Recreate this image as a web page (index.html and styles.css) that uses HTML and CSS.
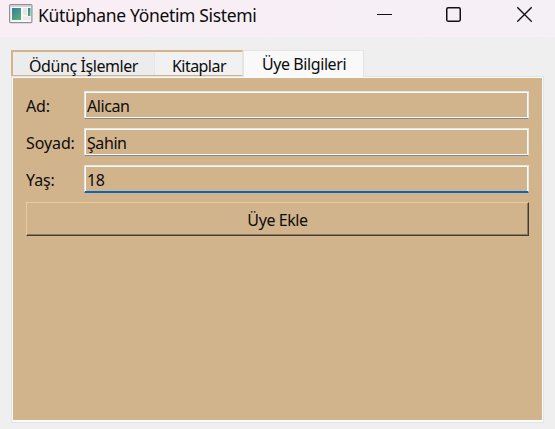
FILE: index.html
```html
<!DOCTYPE html>
<html lang="tr">
<head>
<meta charset="utf-8">
<title>Kütüphane Yönetim Sistemi</title>
<link rel="stylesheet" href="styles.css">
</head>
<body>
<header class="titlebar">
  <svg class="app-icon" width="24" height="20" viewBox="0 0 24 20">
    <defs><linearGradient id="g" x1="0" y1="0" x2=".6" y2="1"><stop offset="0" stop-color="#397aa0"/><stop offset="1" stop-color="#55ae78"/></linearGradient></defs>
    <rect x=".6" y=".6" width="22.3" height="18" rx="1" fill="#f7f7f8" stroke="#8e9096" stroke-width="1.2"/>
    <path d="M1.2 2H22.3" stroke="#c9cbd5" stroke-width="1.6"/>
    <rect x="3" y="4" width="9" height="12" fill="url(#g)"/>
    <rect x="14" y="4" width="4" height="7" fill="#e3e5e6"/>
    <rect x="14" y="12.5" width="8" height="3.5" fill="#e9eaeb"/>
    <rect x="19" y="4" width="2.5" height="8" fill="url(#g)"/>
  </svg>
  <h1 class="title">Kütüphane Yönetim Sistemi</h1>
  <div class="controls">
    <svg width="15" height="16" viewBox="0 0 15 16"><path d="M0 8.5H15" stroke="#111" stroke-width="1"/></svg>
    <svg class="maximize" width="15" height="16" viewBox="0 0 15 16"><rect x=".75" y="1.75" width="13.5" height="13.5" rx="1.4" fill="none" stroke="#111" stroke-width="1.5"/></svg>
    <svg width="15" height="16" viewBox="0 0 15 16"><path d="M.3 1.3L14.7 15.7M14.7 1.3L.3 15.7" stroke="#111" stroke-width="1.3"/></svg>
  </div>
</header>
<main class="content">
  <nav class="tabs">
    <div class="tab tab-first">Ödünç İşlemler</div>
    <div class="tab tab-second">Kitaplar</div>
    <div class="tab tab-active">Üye Bilgileri</div>
  </nav>
  <section class="panel">
    <div class="row"><span class="label">Ad:</span><div class="field">Alican</div></div>
    <div class="row"><span class="label">Soyad:</span><div class="field">Şahin</div></div>
    <div class="row"><span class="label">Yaş:</span><div class="field focused">18</div></div>
    <button class="add">Üye Ekle</button>
  </section>
</main>
</body>
</html>
```
FILE: styles.css
```css
* { box-sizing: border-box; }
body {
  margin: 0;
  width: 555px;
  height: 429px;
  overflow: hidden;
  background: #efefef;
  color: #0c0c0c;
  font: 16px/20px "Noto Sans", sans-serif;
  letter-spacing: -0.42px;
  white-space: nowrap;
}
.titlebar {
  display: flex;
  align-items: flex-start;
  height: 37px;
  background: linear-gradient(90deg, #f9eef4, #f5f0f6);
}
.app-icon { margin: 4px 0 0 9px; }
.title {
  margin: 3px 0 0 5px;
  font-size: 17.5px;
  line-height: 24px;
  font-weight: 400;
  letter-spacing: -0.34px;
}
.controls {
  display: flex;
  gap: 55px;
  margin: 6px 23px 0 auto;
}
.maximize { margin: 0 1px 0 -1px; }
.content { padding: 13px 11px 0; }
.tabs {
  display: flex;
  height: 26px;
}
.tab {
  background: #ececec;
  border-top: 2px solid #d2b48c;
  border-bottom: 1px solid #d2b48c;
  padding-top: 4px;
}
.tab-first {
  width: 143px;
  border-left: 2px solid #d2b48c;
  padding-left: 16px;
}
.tab-second {
  width: 89px;
  background: #f1f1f1;
  border-right: 1px solid #e5e5e5;
  box-shadow: inset 1px 0 #e5e5e5;
  padding-left: 18px;
  letter-spacing: -0.55px;
}
.tab-active {
  width: 121px;
  height: 27px;
  background: #f9f9f9;
  border: 1px solid #e4e4e4;
  border-bottom: 0;
  padding: 3px 0 0 18px;
  position: relative;
}
.panel {
  width: 533px;
  height: 347px;
  border: 1px solid #e2e3e4;
  background: #d2b48c;
  box-shadow: inset 0 0 0 1px #fbfbfb, inset 0 -2px #fbfbfb;
  padding: 14px 14px 0;
}
.row {
  display: flex;
  height: 28px;
  margin-bottom: 9px;
}
.label { width: 58px; padding-top: 5px; letter-spacing: -0.1px; }
.field {
  width: 445px;
  padding: 4px 0 0 2px;
  border: 1px solid #e6e6e6;
  border-bottom-color: #85868a;
  box-shadow: inset 0 0 0 1px #fafafa;
  border-radius: 1px;
}
.focused {
  border-bottom: 2px solid #0867bd;
  box-shadow: inset 1px 1px #fafafa, inset -1px 0 #fafafa;
}
.add {
  display: block;
  width: 503px;
  height: 34px;
  padding: 2px 0 0;
  background: #d2b48c;
  border: 1px solid #ebcb9c;
  border-right-color: #463a32;
  border-bottom-color: #463a32;
  box-shadow: inset -1px -1px #8d795f;
  color: inherit;
  font: inherit;
  letter-spacing: inherit;
}
```
